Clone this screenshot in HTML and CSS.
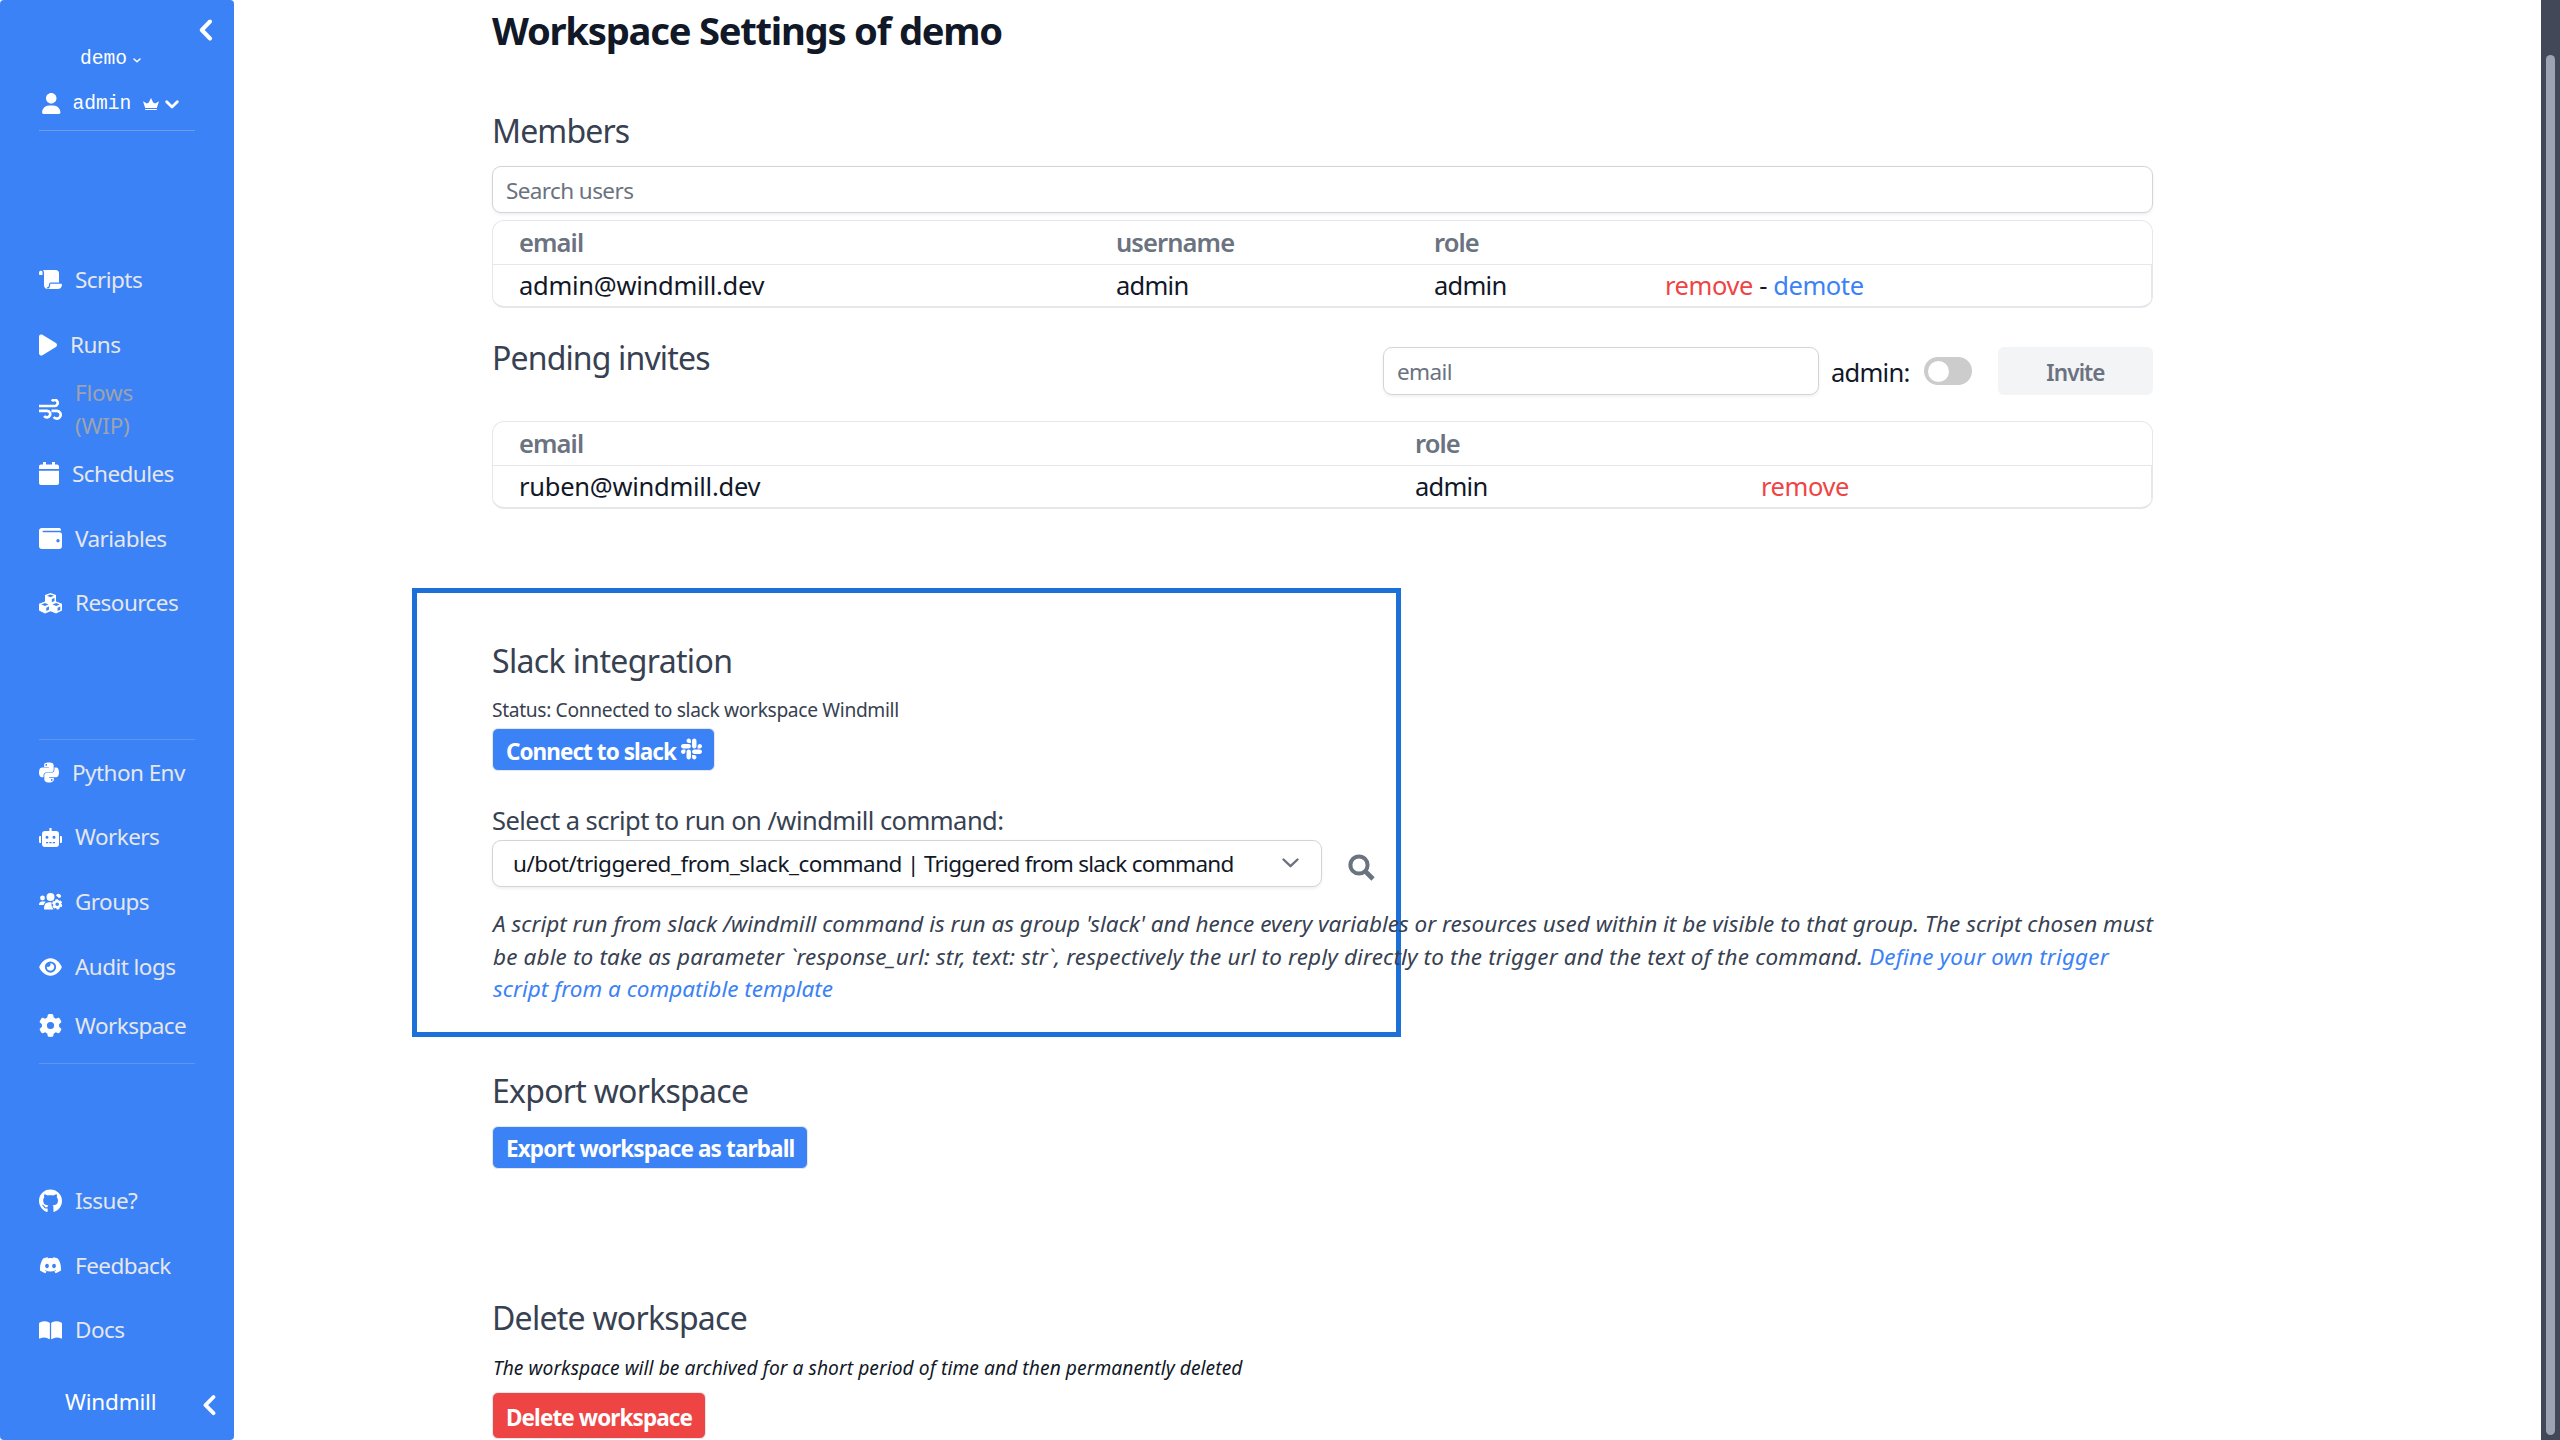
FILE: index.html
```html
<!DOCTYPE html>
<html lang="en">
<head>
<meta charset="utf-8">
<title>Workspace Settings</title>
<link rel="stylesheet" href="styles.css">
</head>
<body>
<aside class="sidebar">
  <div class="collapse collapse-top"><svg width="14" height="22" viewBox="0 0 14 22"><path class="stroke" d="M11 2.5 2.8 11l8.200 8.500" stroke-width="4"/></svg></div>
  <div class="workspace-pick">demo <svg width="8" height="5" viewBox="0 0 8 5"><path class="stroke" d="M1 1l3 2.800L7 1" stroke-width="1.500"/></svg></div>
  <div class="user-pick">
    <svg width="18.500" height="21" viewBox="0 0 448 512"><path d="M224 256c70.700 0 128-57.310 128-128s-57.300-128-128-128C153.300 0 96 57.310 96 128S153.300 256 224 256zM274.700 304H173.300C77.610 304 0 381.600 0 477.300c0 19.140 15.520 34.670 34.660 34.670h378.700C432.500 512 448 496.500 448 477.300C448 381.600 370.400 304 274.700 304z"/></svg>
    <span class="user-name">admin</span>
    <svg class="crown" width="16" height="12" viewBox="0 0 16 12"><path d="M8 0 10.200 4.600 12.200 5.600 16 3.200 13.800 10H2.200L0 3.200 3.800 5.600 5.800 4.600ZM2.200 10.900H13.800V12H2.200Z"/></svg>
    <svg class="user-caret" width="14" height="9" viewBox="0 0 14 9"><path class="stroke" d="M1.700 1.700 7 7l5.300-5.300" stroke-width="2.800"/></svg>
  </div>
  <nav class="group group-main">
    <a class="item"><svg width="23" height="19" viewBox="0 0 23 19"><path d="M0 2.500A2 2 0 0 1 3.500 1.500V5H.8Q0 5 0 4.200ZM4 0H16.500A3.500 3.500 0 0 1 20 3.500V12.500H12Q10 12.500 10 14.500 10 17.500 7.500 17.500L9 19A4 4 0 0 1 5 15V3Q5 1 4 0ZM11.200 13.700H22Q23 13.700 23 14.800 22.700 19 18.500 19H8.500Q11.200 18 11.200 15Z"/></svg>Scripts</a>
    <a class="item"><svg width="18" height="24" viewBox="0 0 384 512"><path d="M361 215C375.300 223.800 384 239.300 384 256C384 272.700 375.300 288.200 361 296.100L73.030 472.100C58.210 482 39.660 482.400 24.520 473.900C9.377 465.400 0 449.400 0 432V80C0 62.640 9.377 46.630 24.520 38.130C39.660 29.640 58.210 29.990 73.030 39.040L361 215z"/></svg>Runs</a>
    <a class="item disabled"><svg width="23" height="21" viewBox="0 0 23 21"><path class="stroke flat" d="M0 7H15.800A3.100 3.100 0 1 0 13 2.200M0 11.800H8A3.300 3.300 0 1 1 5.200 17M12.500 11.800H18A3.900 3.900 0 1 1 14.600 18" stroke-width="2.700"/></svg><span>Flows<br>(WIP)</span></a>
    <a class="item"><svg width="20" height="23" viewBox="0 0 20 23"><path d="M4 0H7V2.500H13V0H16V2.500H18Q20 2.500 20 4.500V7H0V4.500Q0 2.500 2 2.500H4ZM0 8.700H20V21Q20 23 18 23H2Q0 23 0 21Z"/></svg>Schedules</a>
    <a class="item"><svg width="23" height="21" viewBox="0 0 23 21"><path fill-rule="evenodd" d="M3 0H20.500Q21.700 0 21.900 1.500V2.800H3.700V4.200H20.500Q23 4.200 23 6.500V18Q23 21 20 21H3Q0 21 0 18V3Q0 0 3 0ZM19 11A1.700 1.700 0 1 0 19 14.400 1.700 1.700 0 1 0 19 11Z"/></svg>Variables</a>
    <a class="item"><svg width="23" height="21" viewBox="0 0 23 21"><path d="M11.500 0 17 2V8.500L23 10.800V17.500L17 20.600 11.500 18.200 6 20.600 0 17.500V10.800L6 8.500V2Z"/><path class="cut" d="M8 2.800 11.500 1.600 15 2.800 11.500 4.200ZM12.800 6 15.500 4.900V8L12.800 9.200ZM2.300 11.500 6 10.100 9.500 11.500 6 13ZM13.500 11.500 17.200 10.100 20.700 11.500 17.200 13ZM7.300 14.800 10 13.600V16.700L7.300 18ZM18.600 14.800 21.300 13.600V16.700L18.600 18Z"/></svg>Resources</a>
  </nav>
  <nav class="group group-admin">
    <a class="item"><svg width="20" height="23" viewBox="0 0 448 512"><path d="M439.800 200.500c-7.700-30.900-22.300-54.200-53.400-54.200h-40.100v47.400c0 36.800-31.200 67.800-66.800 67.800H172.700c-29.200 0-53.400 25-53.400 54.300v101.800c0 29 25.200 46 53.400 54.300 33.800 9.900 66.300 11.700 106.800 0 26.900-7.800 53.400-23.500 53.400-54.300v-40.700H226.200v-13.600h160.200c31.100 0 42.600-21.700 53.400-54.200 11.200-33.500 10.700-65.700 0-108.600zM286.200 404c11.100 0 20.100 9.100 20.100 20.300 0 11.300-9 20.400-20.100 20.400-11 0-20.100-9.200-20.100-20.400.1-11.300 9.100-20.300 20.100-20.300zM167.800 248.100h106.800c29.700 0 53.400-24.500 53.400-54.300V91.900c0-29-24.400-50.700-53.400-55.600-35.800-5.900-74.700-5.600-106.800.1-45.200 8-53.400 24.700-53.400 55.600v40.700h106.900v13.600h-147c-31.100 0-58.300 18.700-66.800 54.200-9.800 40.700-10.200 66.100 0 108.600 7.600 31.600 25.700 54.200 56.800 54.200H101v-48.800c0-35.300 30.500-66.400 66.800-66.400zm-6.700-142.600c-11.100 0-20.100-9.100-20.100-20.300.1-11.300 9-20.400 20.100-20.400 11 0 20.100 9.200 20.100 20.400s-9 20.300-20.100 20.300z"/></svg>Python Env</a>
    <a class="item"><svg width="23" height="19" viewBox="0 0 23 19"><path fill-rule="evenodd" d="M10.400 0H12.600V3H17Q20 3 20 6V16Q20 19 17 19H6Q3 19 3 16V6Q3 3 6 3H10.400ZM0 9Q0 8 1 8H2V15H1Q0 15 0 14ZM21 8H22Q23 8 23 9V14Q23 15 22 15H21ZM8 7.800A1.500 1.500 0 1 0 8 10.800 1.500 1.500 0 1 0 8 7.800ZM15 7.800A1.500 1.500 0 1 0 15 10.800 1.500 1.500 0 1 0 15 7.800ZM7 14V15.200H9.200V14ZM10.400 14V15.200H12.600V14ZM13.800 14V15.200H16V14Z"/></svg>Workers</a>
    <a class="item"><svg width="23" height="17" viewBox="0 0 23 17"><circle cx="3.500" cy="5" r="2.400"/><circle cx="11.500" cy="4" r="4"/><path d="M0 12Q0 8.500 3 8.500H6.500L4.500 12ZM5 15.700Q5 9.300 10 9.300H12.500Q11.700 13 14.500 16.500H5.700Q5 16.500 5 15.700ZM17 2.600A2.500 2.500 0 0 1 21.800 4.200L20 5Z"/><circle class="gear-teeth" cx="18.200" cy="11.300" r="4.300"/><circle class="gear-ring" cx="18.200" cy="11.300" r="3"/></svg>Groups</a>
    <a class="item"><svg width="23" height="20" viewBox="0 0 576 512"><path fill-rule="evenodd" d="M288 32c-80.800 0-145.500 36.800-192.600 80.600C48.600 156 17.300 208 2.500 243.700c-3.300 7.900-3.300 16.700 0 24.600C17.300 304 48.600 356 95.400 399.400C142.500 443.200 207.200 480 288 480s145.500-36.800 192.600-80.600c46.800-43.500 78.100-95.400 93-131.100c3.300-7.900 3.300-16.700 0-24.600c-14.900-35.700-46.200-87.700-93-131.100C433.500 68.800 368.800 32 288 32zM144 256a144 144 0 1 1 288 0 144 144 0 1 1 -288 0zm144-64c0 35.300-28.700 64-64 64c-7.100 0-13.900-1.200-20.300-3.300c-5.500-1.800-11.900 1.600-11.700 7.400c.3 6.900 1.300 13.800 3.200 20.700c13.700 51.200 66.400 81.600 117.600 67.900s81.600-66.400 67.900-117.600c-11.100-41.500-47.800-69.400-88.600-71.100c-5.800-.2-9.200 6.100-7.400 11.700c2.100 6.400 3.300 13.200 3.300 20.300z"/></svg>Audit logs</a>
    <a class="item item-last"><svg width="23" height="23" viewBox="0 0 512 512"><path d="M495.900 166.600c3.200 8.700 .5 18.400-6.400 24.600l-43.300 39.400c1.100 8.300 1.700 16.800 1.700 25.400s-.6 17.100-1.700 25.400l43.300 39.400c6.900 6.200 9.600 15.900 6.400 24.600c-4.400 11.900-9.700 23.300-15.800 34.300l-4.700 8.100c-6.600 11-14 21.400-22.100 31.200c-5.900 7.200-15.700 9.600-24.500 6.800l-55.700-17.700c-13.400 10.300-28.200 18.900-44 25.400l-12.500 57.100c-2 9.100-9 16.300-18.200 17.800c-13.800 2.300-28 3.500-42.500 3.500s-28.700-1.200-42.500-3.500c-9.200-1.500-16.200-8.700-18.200-17.800l-12.500-57.100c-15.800-6.500-30.600-15.100-44-25.400L83.100 425.900c-8.800 2.800-18.600 .3-24.500-6.800c-8.100-9.800-15.500-20.200-22.100-31.200l-4.700-8.100c-6.100-11-11.400-22.400-15.800-34.300c-3.200-8.700-.5-18.400 6.400-24.600l43.300-39.400C64.600 273.100 64 264.600 64 256s.6-17.100 1.700-25.400L22.400 191.200c-6.900-6.200-9.600-15.900-6.400-24.600c4.400-11.900 9.700-23.300 15.800-34.300l4.700-8.100c6.600-11 14-21.400 22.100-31.200c5.900-7.200 15.700-9.600 24.500-6.800l55.700 17.700c13.400-10.300 28.200-18.900 44-25.400l12.500-57.100c2-9.100 9-16.300 18.200-17.800C227.300 1.200 241.500 0 256 0s28.700 1.200 42.500 3.500c9.200 1.500 16.200 8.700 18.200 17.800l12.500 57.100c15.800 6.500 30.600 15.100 44 25.400l55.700-17.700c8.800-2.800 18.600-.3 24.500 6.800c8.100 9.800 15.500 20.200 22.100 31.200l4.700 8.100c6.100 11 11.400 22.400 15.800 34.300zM256 336a80 80 0 1 0 0-160 80 80 0 1 0 0 160z"/></svg>Workspace</a>
  </nav>
  <nav class="group group-help">
    <a class="item"><svg width="23" height="24" viewBox="0 0 496 512"><path d="M165.900 397.400c0 2-2.300 3.600-5.200 3.600-3.300.3-5.600-1.300-5.600-3.600 0-2 2.300-3.600 5.200-3.600 3-.3 5.600 1.300 5.600 3.600zm-31.100-4.500c-.7 2 1.300 4.300 4.300 4.900 2.600 1 5.600 0 6.200-2s-1.300-4.300-4.300-5.200c-2.600-.7-5.500.3-6.200 2.300zm44.200-1.700c-2.900.7-4.900 2.600-4.600 4.900.3 2 2.900 3.300 5.900 2.600 2.900-.7 4.900-2.600 4.600-4.600-.3-1.900-3-3.200-5.900-2.900zM244.800 8C106.100 8 0 113.300 0 252c0 110.900 69.800 205.800 169.500 239.200 12.800 2.300 17.300-5.600 17.300-12.100 0-6.200-.3-40.400-.3-61.400 0 0-70 15-84.700-29.800 0 0-11.400-29.100-27.800-36.600 0 0-22.900-15.700 1.600-15.400 0 0 24.900 2 38.600 25.800 21.900 38.600 58.600 27.500 72.900 20.900 2.300-16 8.800-27.100 16-33.700-55.900-6.200-112.300-14.300-112.300-110.500 0-27.500 7.600-41.300 23.600-58.900-2.600-6.500-11.100-33.300 2.600-67.900 20.900-6.500 69 27 69 27 20-5.600 41.500-8.500 62.800-8.500s42.800 2.900 62.800 8.500c0 0 48.100-33.600 69-27 13.700 34.700 5.200 61.400 2.600 67.900 16 17.700 25.800 31.500 25.800 58.900 0 96.500-58.900 104.200-114.800 110.500 9.200 7.900 17 22.900 17 46.400 0 33.700-.3 75.400-.3 83.600 0 6.500 4.600 14.400 17.300 12.100C428.200 457.800 496 362.900 496 252 496 113.300 383.500 8 244.800 8z"/></svg>Issue?</a>
    <a class="item"><svg width="23" height="18.400" viewBox="0 0 640 512"><path d="M524.531,69.836a1.500,1.500,0,0,0-.764-.7A485.065,485.065,0,0,0,404.081,32.030a1.816,1.816,0,0,0-1.923.91,337.461,337.461,0,0,0-14.900,30.600,447.848,447.848,0,0,0-134.426,0,309.541,309.541,0,0,0-15.135-30.600,1.890,1.890,0,0,0-1.924-.91A483.689,483.689,0,0,0,116.085,69.137a1.712,1.712,0,0,0-.788.676C39.068,183.651,18.186,294.690,28.430,404.354a2.016,2.016,0,0,0,.765,1.375A487.666,487.666,0,0,0,176.020,479.918a1.900,1.900,0,0,0,2.063-.676A348.200,348.200,0,0,0,208.120,430.400a1.860,1.860,0,0,0-1.019-2.588,321.173,321.173,0,0,1-45.868-21.853,1.885,1.885,0,0,1-.185-3.126c3.082-2.309,6.166-4.711,9.109-7.137a1.819,1.819,0,0,1,1.900-.256c96.229,43.917,200.410,43.917,295.500,0a1.812,1.812,0,0,1,1.924.233c2.944,2.426,6.027,4.851,9.132,7.160a1.884,1.884,0,0,1-.162,3.126,301.407,301.407,0,0,1-45.890,21.830,1.875,1.875,0,0,0-1,2.611,391.055,391.055,0,0,0,30.014,48.815,1.864,1.864,0,0,0,2.063.7A486.048,486.048,0,0,0,610.700,405.729a1.882,1.882,0,0,0,.765-1.352C623.729,277.594,590.933,167.465,524.531,69.836ZM222.491,337.580c-28.972,0-52.844-26.587-52.844-59.239S193.056,219.100,222.491,219.100c29.665,0,53.306,26.820,52.843,59.239C275.334,310.993,251.924,337.580,222.491,337.580Zm195.380,0c-28.971,0-52.843-26.587-52.843-59.239S388.437,219.100,417.871,219.100c29.667,0,53.307,26.820,52.844,59.239C470.715,310.993,447.538,337.580,417.871,337.580Z"/></svg>Feedback</a>
    <a class="item"><svg width="23" height="20.500" viewBox="0 0 576 512"><path d="M144.300 32.040C106.900 31.290 63.700 41.440 18.600 61.290c-11.420 5.026-18.600 16.670-18.600 29.150l0 357.600c0 11.550 11.990 19.550 22.450 14.650c126.300-59.140 219.800 11 223.800 14.010C249.100 478.900 252.500 480 256 480c12.400 0 16-11.380 16-15.980V80.040c0-5.203-2.531-10.080-6.781-13.080C263.300 65.580 216.700 33.350 144.300 32.040zM557.400 61.290c-45.110-19.790-88.480-29.610-125.700-29.260c-72.440 1.312-118.100 33.550-120.900 34.920C306.500 69.960 304 74.830 304 80.040v383.100C304 468.400 307.500 480 320 480c3.484 0 6.938-1.125 9.781-3.328c3.925-3.018 97.440-73.160 223.800-14c10.460 4.896 22.450-3.105 22.450-14.650l.0001-357.600C575.100 77.970 568.800 66.310 557.400 61.290z"/></svg>Docs</a>
  </nav>
  <div class="brand"><span>Windmill</span><svg width="13" height="22" viewBox="0 0 13 22"><path class="stroke" d="M10.500 3 2.500 11.200l8 8" stroke-width="3.800"/></svg></div>
</aside>

<main class="content">
  <h1>Workspace Settings of demo</h1>

  <h2 class="members-title">Members</h2>
  <div class="field search">Search users</div>
  <div class="table members">
    <div class="tr th"><span>email</span><span>username</span><span>role</span><span></span></div>
    <div class="tr td"><span class="mail">admin@windmill.dev</span><span>admin</span><span>admin</span><span class="actions"><a class="danger">remove</a> - <a class="link">demote</a></span></div>
  </div>

  <div class="invite-row">
    <h2>Pending invites</h2>
    <div class="field invite-email">email</div>
    <span class="admin-label">admin:</span>
    <span class="toggle"></span>
    <span class="invite-btn">Invite</span>
  </div>
  <div class="table invites">
    <div class="tr th"><span>email</span><span>role</span><span></span></div>
    <div class="tr td"><span class="mail">ruben@windmill.dev</span><span>admin</span><span class="actions"><a class="danger">remove</a></span></div>
  </div>

  <h2 class="slack-title">Slack integration</h2>
  <p class="status">Status: Connected to slack workspace Windmill</p>
  <div class="btn">Connect to slack<svg width="21" height="24" viewBox="0 0 448 512"><path d="M94.120 315.100c0 25.900-21.160 47.060-47.060 47.060S0 341 0 315.100c0-25.900 21.160-47.060 47.060-47.060h47.060v47.060zm23.720 0c0-25.900 21.160-47.060 47.060-47.060s47.060 21.160 47.060 47.060v117.840c0 25.900-21.160 47.060-47.060 47.060s-47.060-21.160-47.060-47.060V315.100zm47.060-188.980c-25.900 0-47.060-21.160-47.060-47.060S139 32 164.900 32s47.060 21.160 47.060 47.060v47.060H164.900zm0 23.720c25.900 0 47.060 21.160 47.060 47.060s-21.160 47.060-47.060 47.060H47.060C21.160 243.960 0 222.800 0 196.900s21.160-47.060 47.060-47.060H164.900zm188.980 47.060c0-25.900 21.160-47.060 47.060-47.060 25.900 0 47.060 21.160 47.060 47.060s-21.160 47.060-47.060 47.060h-47.060V196.900zm-23.720 0c0 25.900-21.160 47.060-47.060 47.060-25.900 0-47.060-21.160-47.060-47.060V79.060c0-25.900 21.160-47.060 47.060-47.060 25.900 0 47.060 21.160 47.060 47.060V196.900zM283.100 385.880c25.900 0 47.060 21.160 47.060 47.060 0 25.900-21.160 47.060-47.060 47.060-25.900 0-47.060-21.160-47.060-47.060v-47.060h47.060zm0-23.720c-25.900 0-47.060-21.160-47.060-47.060 0-25.900 21.160-47.060 47.060-47.060h117.840c25.900 0 47.060 21.160 47.060 47.060 0 25.900-21.160 47.060-47.060 47.060H283.100z"/></svg></div>
  <p class="select-label">Select a script to run on /windmill command:</p>
  <div class="select-row">
    <div class="field select"><span><span class="script-path">u/bot/triggered_from_slack_command</span> | Triggered from slack command</span><svg width="17" height="10" viewBox="0 0 17 10"><path class="stroke" d="M1.500 1.500 8.500 8.200l7-6.700" stroke-width="2.400"/></svg></div>
    <svg class="magnifier" width="27" height="27" viewBox="0 0 27 27"><circle class="stroke" cx="11" cy="11" r="8.600" stroke-width="4"/><path class="stroke flat" d="M17.500 17.500l7.500 7.500" stroke-width="4.600"/></svg>
  </div>
  <p class="note">A script run from slack /windmill command is run as group 'slack' and hence every variables or resources used within it be visible to that group. The script chosen must<br><span class="note-wide">be able to take as parameter `response_url: str, text: str`, respectively the url to reply directly to the trigger and the text of the command. <a class="link">Define your own trigger</a></span><br><a class="link">script from a compatible template</a></p>

  <h2 class="export-title">Export workspace</h2>
  <div class="btn export-btn">Export workspace as tarball</div>

  <h2 class="delete-title">Delete workspace</h2>
  <p class="delete-note">The workspace will be archived for a short period of time and then permanently deleted</p>
  <div class="btn delete-btn">Delete workspace</div>
  <div class="highlight"></div>
</main>

<div class="scrollbar"><div class="thumb"></div></div>
</body>
</html>
```
FILE: styles.css
```css
* { box-sizing: border-box; }

body {
  margin: 0;
  height: 1440px;
  overflow: hidden;
  display: flex;
  background: #fff;
  color: #111827;
  font-family: "Noto Sans", sans-serif;
  font-size: 25.5px;
  letter-spacing: -0.53px;
}

h1, h2, p { margin: 0; font-weight: 400; white-space: nowrap; }
svg { display: block; flex: none; fill: currentColor; }
.stroke { fill: none; stroke: currentColor; stroke-linecap: round; stroke-linejoin: round; }
.flat { stroke-linecap: butt; }

/* Sidebar */
.sidebar {
  width: 234px;
  height: 1440px;
  flex: none;
  display: flex;
  flex-direction: column;
  background: #3b82f6;
  border-radius: 4px;
  color: #fff;
  padding: 0 39px;
}
.collapse-top { height: 41px; padding-top: 19px; margin-right: -17.5px; display: flex; justify-content: flex-end; }
.workspace-pick, .user-pick {
  font-family: "Liberation Mono", monospace;
  font-size: 19.6px;
  letter-spacing: 0;
  display: flex;
  align-items: center;
}
.workspace-pick { height: 34px; padding: 2px 0 0 41px; gap: 6px; }
.workspace-pick svg { margin-top: 3px; }
.user-pick { height: 56px; padding: 2px 0 0 3px; border-bottom: 1px solid rgba(190, 195, 215, .4); }
.user-name { margin: 0 0 0 12px; }
.crown { margin: 0 0 0 11.5px; }
.user-caret { margin: 2px 0 0 6.5px; }

.group { display: flex; flex-direction: column; }
.item {
  display: flex;
  align-items: center;
  gap: 13px;
  height: 64.7px;
  padding-top: 2px;
  font-size: 22.5px;
  line-height: 32.6px;
  letter-spacing: -0.55px;
  color: #e5e7eb;
  white-space: nowrap;
}
.item svg { color: #fff; margin-bottom: 1px; }
.item.disabled { color: #9ca3af; letter-spacing: -0.2px; }
.item-last { height: 53px; }
.group-main { margin-top: 116px; }
.group-admin {
  margin-top: 103.5px;
  padding-bottom: 11.5px;
  border-top: 1px solid rgba(190, 195, 215, .3);
  border-bottom: 1px solid rgba(190, 195, 215, .3);
}
.group-help { margin-top: 104px; }
.cut { fill: #3b82f6; }
.gear-teeth { fill: none; stroke: #fff; stroke-width: 1.7; stroke-dasharray: 2.6 1.9; }
.gear-ring { fill: none; stroke: #fff; stroke-width: 2.4; }
.brand {
  display: flex;
  align-items: center;
  justify-content: space-between;
  height: 32.6px;
  margin: 23px -20.5px 0 26px;
  font-size: 22.5px;
  letter-spacing: -0.2px;
}
.brand svg { margin-top: 7px; }

/* Content */
.content { width: 1661px; flex: none; margin-left: 258px; padding-top: 8px; }
h1 { font-size: 38.2px; line-height: 44px; font-weight: 700; letter-spacing: -1.25px; }
h2 { font-size: 32px; line-height: 46px; letter-spacing: -0.85px; color: #374151; }
.members-title { margin-top: 55.5px; }

.field {
  display: flex;
  align-items: center;
  border: 1px solid #d1d5db;
  border-radius: 9px;
  box-shadow: 0 1.6px 3px rgba(0, 0, 0, .06);
  font-size: 22.5px;
  letter-spacing: -0.6px;
  color: #6b7280;
  background: #fff;
}
.search { height: 47px; margin-top: 12.5px; padding: 2px 0 0 13px; }

.table {
  height: 88px;
  border: 1px solid #e5e7eb;
  border-bottom-width: 2px;
  border-radius: 12px;
  overflow: hidden;
}
.members { margin-top: 7px; }
.tr { display: grid; padding-left: 26px; white-space: nowrap; }
.members .tr { grid-template-columns: 597px 318px 231px 1fr; }
.invites .tr { grid-template-columns: 896px 346px 1fr; }
.th { height: 43px; line-height: 43px; font-weight: 600; letter-spacing: -0.9px; color: #6b7280; }
.td { height: 42px; line-height: 41px; border-top: 1px solid #e5e7eb; border-right: 1px solid #e5e7eb; letter-spacing: -0.75px; }
.mail { letter-spacing: -0.27px; }
.actions { letter-spacing: -0.42px; }
.danger { color: #ef4444; }
.link { color: #3b82f6; }

.invite-row { display: flex; align-items: flex-start; height: 87px; margin-top: 26px; }
.invite-row h2 { margin-top: 0.5px; }
.invite-email { width: 436px; height: 48px; margin: 12.5px 0 0 auto; padding: 2px 0 0 13px; }
.admin-label { line-height: 48px; margin: 13.5px 0 0 12px; width: 93px; letter-spacing: -0.75px; }
.toggle { width: 48px; height: 28px; margin-top: 23px; padding: 3.5px; border-radius: 14px; background: #ccc; }
.toggle::before { content: ""; display: block; width: 21px; height: 21px; border-radius: 50%; background: #fff; }
.invite-btn {
  width: 155px;
  height: 48px;
  margin: 12.5px 0 0 26px;
  border-radius: 6px;
  background: #f3f4f6;
  color: #6b7280;
  font-size: 22.5px;
  font-weight: 600;
  letter-spacing: -0.9px;
  line-height: 51px;
  text-align: center;
}

.slack-title { margin-top: 129px; letter-spacing: -0.65px; }
.status { font-size: 19.2px; line-height: 32px; letter-spacing: -0.34px; margin-top: 10px; color: #374151; }
.btn {
  display: flex;
  align-items: center;
  gap: 5px;
  width: 223px;
  height: 43px;
  margin-top: 2px;
  padding: 3px 0 0 13px;
  border: 1px solid #e5e7eb;
  border-radius: 6px;
  background: #3b82f6;
  color: #fff;
  font-size: 22.5px;
  font-weight: 700;
  letter-spacing: -0.95px;
  white-space: nowrap;
}
.btn svg { margin-top: -4px; }
.select-label { line-height: 40px; margin-top: 29px; color: #374151; }
.select-row { display: flex; height: 68px; }
.select { width: 830px; height: 46.5px; padding: 0 22px 0 20px; justify-content: space-between; color: #111827; white-space: nowrap; }
.script-path { letter-spacing: -0.48px; }
.select { letter-spacing: -0.72px; }
.select svg { color: #6b7280; }
.magnifier { color: #6b7280; margin: 14px 0 0 25.5px; }
.note { font-size: 22.5px; line-height: 32.6px; letter-spacing: 0.01px; font-style: italic; color: #374151; padding-left: 1px; }
.note-wide { letter-spacing: 0.15px; }

.export-title { margin-top: 62.5px; letter-spacing: -0.74px; }
.export-btn { width: 316px; margin-top: 11.5px; letter-spacing: -0.87px; }
.delete-title { margin-top: 126px; letter-spacing: -0.74px; }
.delete-note { font-size: 19.2px; line-height: 32px; letter-spacing: 0.07px; font-style: italic; margin-top: 11.5px; padding-left: 1px; }
.delete-btn { width: 214px; height: 47px; margin-top: 8px; background: #ef4444; letter-spacing: -0.9px; }

/* Frame laid over the Slack section */
.highlight { position: absolute; left: 412px; top: 588px; width: 989px; height: 449px; border: 5px solid #1c71d8; z-index: -1; }

.scrollbar { width: 19px; height: 1440px; margin-left: auto; background: #434859; padding: 55px 5px 5px; }
.thumb { height: 1380px; border-radius: 5px; background: #9ca3b1; }
```
